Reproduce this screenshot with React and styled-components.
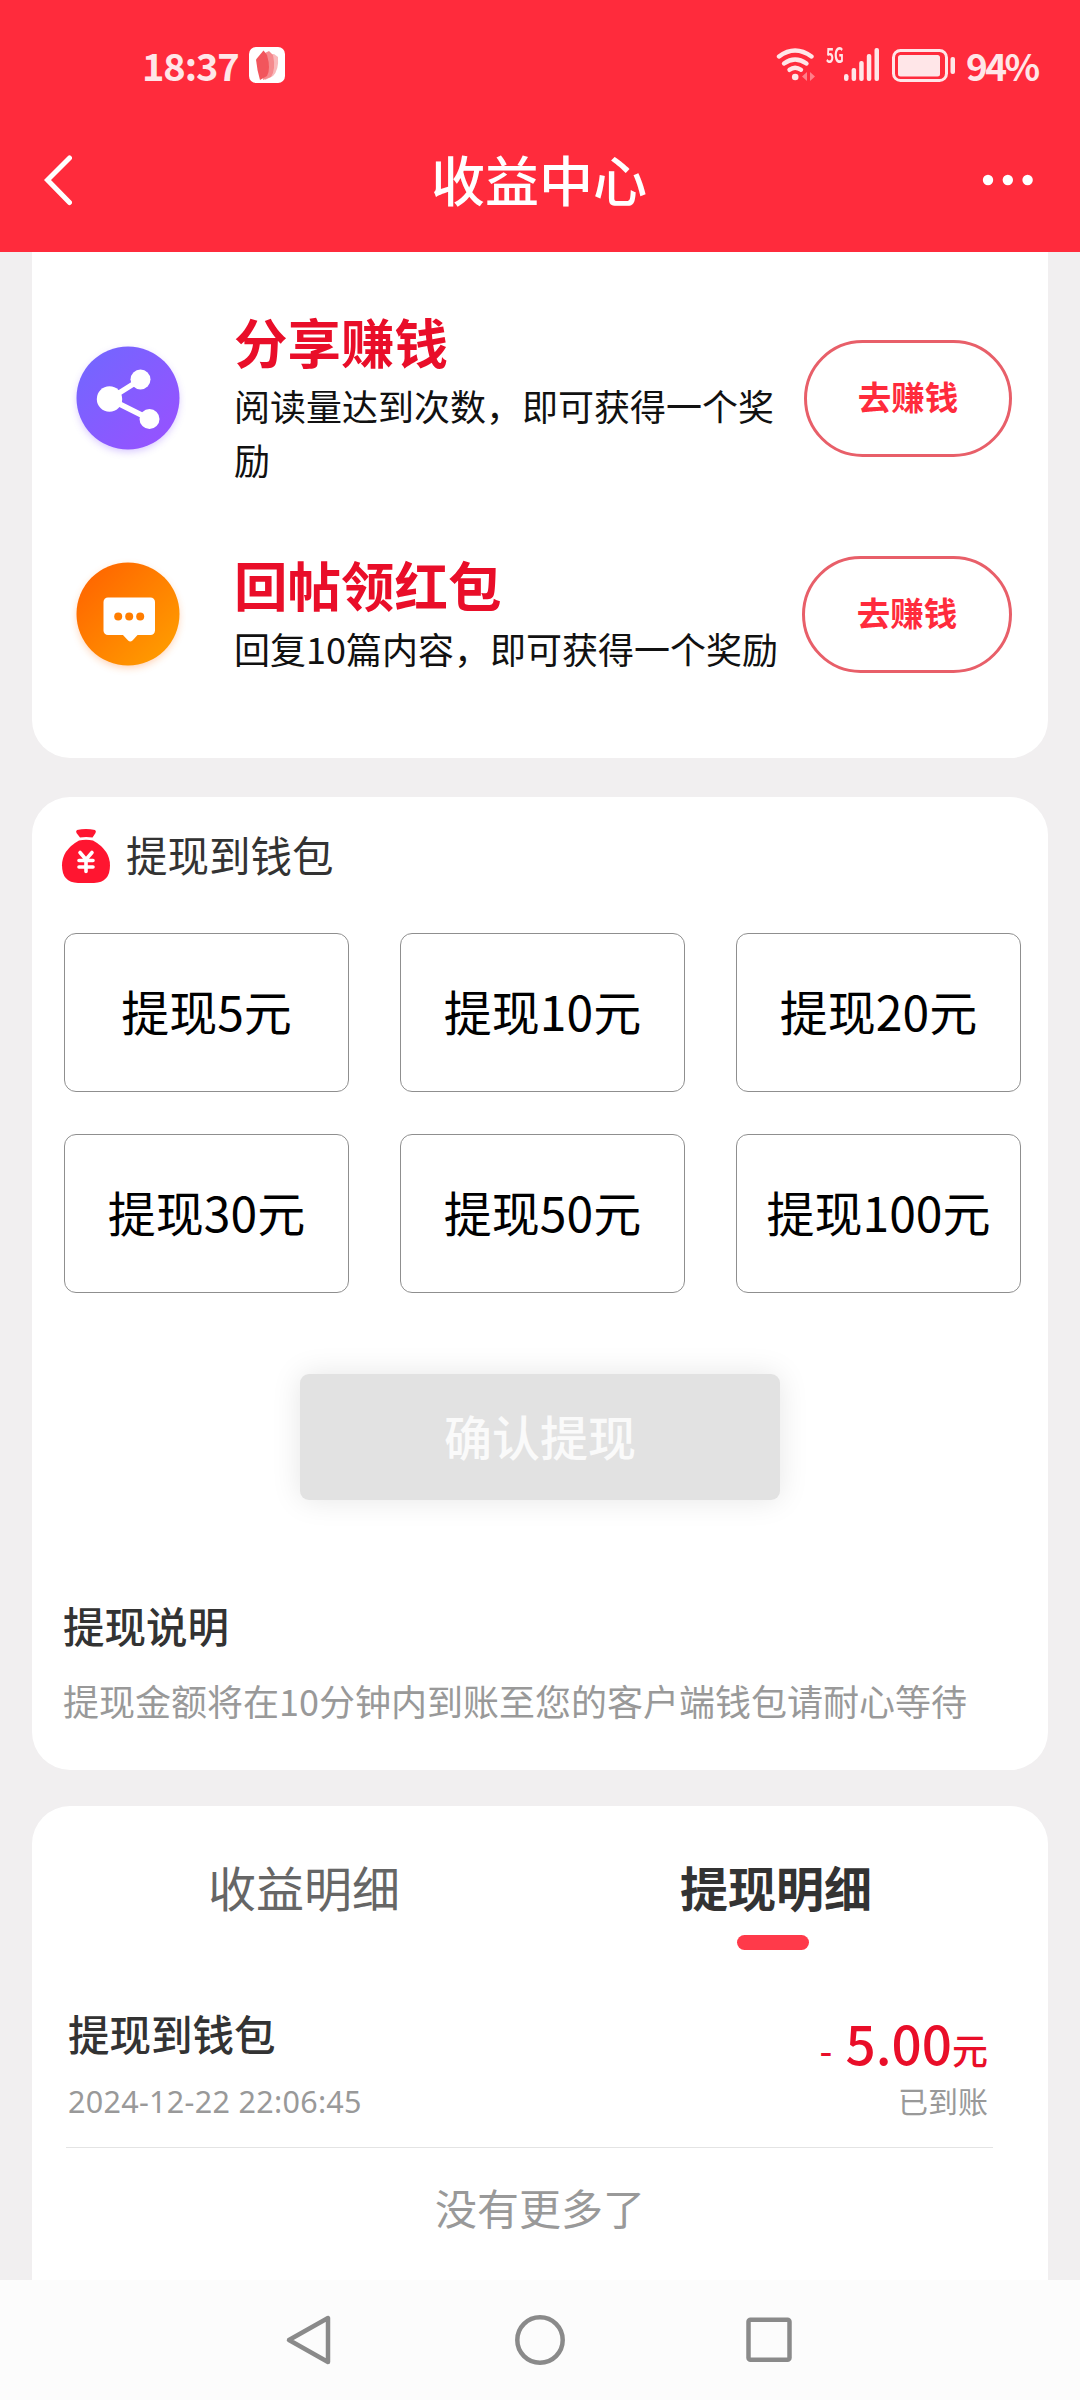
import React from 'react'
import styled, { createGlobalStyle } from 'styled-components'

const GlobalStyle = createGlobalStyle`
  * {
    box-sizing: border-box;
  }
  body {
    margin: 0;
    background: #f1eff0;
    font-family: 'Noto Sans CJK SC', 'Noto Sans', sans-serif;
  }
  button {
    font-family: inherit;
    padding: 0;
    margin: 0;
  }
`

const Screen = styled.div`
  width: 1080px;
  height: 2400px;
  display: flex;
  flex-direction: column;
  overflow: hidden;
  background: #f1eff0;
`

const Header = styled.header`
  height: 252px;
  flex: none;
  background: #ff2b3c;
  color: #fff;
`

const StatusBar = styled.div`
  height: 108px;
  padding: 22px 43px 0 142px;
  display: flex;
  align-items: center;
  justify-content: space-between;
  color: #ffe6e8;
`

const StatusGroup = styled.div`
  display: flex;
  align-items: center;
`

const Clock = styled.span`
  width: 107px;
  font-size: 38px;
  line-height: 40px;
  font-weight: 700;
  letter-spacing: -1.1px;
  white-space: nowrap;
`

const NetLabel = styled.span`
  align-self: flex-start;
  width: 18px;
  margin: 0 0 0 10px;
  font-size: 21px;
  line-height: 19px;
  font-weight: 700;
  transform: scaleX(0.65);
  transform-origin: left center;
`

const Percent = styled.span`
  margin-left: 10px;
  width: 71px;
  font-size: 37px;
  line-height: 40px;
  font-weight: 700;
  letter-spacing: -2.6px;
  white-space: nowrap;
`

const TitleBar = styled.div`
  height: 144px;
  padding: 0 46px 0 44px;
  display: grid;
  grid-template-columns: 100px 1fr 100px;
  align-items: center;

  svg:last-child {
    justify-self: end;
  }
`

const PageTitle = styled.h1`
  margin: 0;
  padding-bottom: 3px;
  text-align: center;
  font-size: 54px;
  line-height: 72px;
  font-weight: 500;
`

const Content = styled.main`
  flex: 1;
  min-height: 0;
  padding: 0 32px;
  overflow: hidden;
`

const Card = styled.section`
  background: #fff;
  border-radius: 38px;
`

const TaskCard = styled(Card)`
  height: 506px;
  padding: 60px 36px 0 38px;
  border-radius: 0 0 38px 38px;
`

const TaskRow = styled.div`
  display: flex;
  align-items: center;
  height: ${({ $height }) => $height}px;
  margin-bottom: ${({ $gap }) => $gap || 0}px;

  > svg {
    margin-bottom: 2px;
  }
`

const TaskText = styled.div`
  width: ${({ $width }) => $width}px;
  margin-left: 48px;
`

const TaskTitle = styled.h2`
  margin: -2px 0 0;
  font-size: 53.5px;
  line-height: 62px;
  font-weight: 700;
  color: #e90e29;
`

const TaskDesc = styled.p`
  margin: 6px 0 0;
  font-size: 36px;
  line-height: 54px;
  color: #111;
`

const EarnButton = styled.button`
  width: ${({ $width }) => $width}px;
  height: 117px;
  margin-left: auto;
  padding-bottom: 5px;
  border: 3px solid #e85f69;
  border-radius: 59px;
  background: #fff;
  color: #ff2b3c;
  font-size: 33.5px;
  line-height: 50px;
  font-weight: 700;
`

const WithdrawCard = styled(Card)`
  height: 973px;
  margin-top: 39px;
  padding: 28px 26px 0 32px;
`

const CardHeading = styled.div`
  display: flex;
  align-items: center;
  height: 62px;
  margin-left: -3px;
  gap: 15px;
  color: #333;

  span {
    padding-bottom: 4px;
    font-size: 41.5px;
    line-height: 62px;
  }
`

const AmountGrid = styled.div`
  margin-top: 46px;
  display: grid;
  grid-template-columns: repeat(3, 285px);
  grid-auto-rows: 159px;
  gap: 42px 51px;
`

const AmountOption = styled.button`
  padding-bottom: 5px;
  border: 1px solid #8f8f8f;
  border-radius: 12px;
  background: #fff;
  color: #000;
  font-size: 48px;
  line-height: 72px;
  white-space: nowrap;
`

const ConfirmButton = styled.button`
  display: block;
  width: 480px;
  height: 126px;
  margin: 81px 0 0 236px;
  padding-bottom: 5px;
  border: 0;
  border-radius: 9px;
  background: #e2e2e2;
  box-shadow: 0 0 30px rgba(0, 0, 0, 0.1);
  color: #fafafa;
  font-size: 48px;
  font-weight: 500;
`

const NoteTitle = styled.h3`
  margin: 94px 0 0 -1px;
  font-size: 41.5px;
  line-height: 62px;
  font-weight: 500;
  color: #333;
`

const NoteText = styled.p`
  margin: 17px 0 0 -1px;
  font-size: 36px;
  line-height: 54px;
  white-space: nowrap;
  color: #999;
`

const DetailCard = styled(Card)`
  height: 600px;
  margin-top: 36px;
  padding: 44px 32px 0;
`

const Tabs = styled.div`
  display: grid;
  grid-template-columns: 1fr 1fr;
  padding: 0 4px;
`

const Tab = styled.div`
  display: flex;
  flex-direction: column;
  align-items: center;
  height: 101px;
  font-size: 48px;
  line-height: 72px;
  font-weight: ${({ $active }) => ($active ? 700 : 400)};
  color: ${({ $active }) => ($active ? '#333' : '#666')};

  &::after {
    content: '';
    width: 72px;
    height: 15px;
    margin: 13px 6px 0 0;
    border-radius: 8px;
    background: ${({ $active }) => ($active ? '#ff3a4a' : 'transparent')};
  }
`

const Record = styled.div`
  display: flex;
  justify-content: space-between;
  width: 927px;
  height: 197px;
  margin-left: 2px;
  padding: 51px 5px 0 2px;
  border-bottom: 1px solid #e4e4e4;
`

const RecordTitle = styled.div`
  font-size: 41.5px;
  line-height: 62px;
  font-weight: 500;
  color: #333;
`

const RecordTime = styled.div`
  margin-top: 17px;
  font-family: 'Noto Sans', sans-serif;
  font-size: 30.5px;
  line-height: 40px;
  letter-spacing: 0.3px;
  color: #999;
`

const RecordSide = styled.div`
  text-align: right;
`

const RecordAmount = styled.div`
  font-size: 36px;
  line-height: 80px;
  font-weight: 500;
  color: #e90e29;

  b {
    margin-left: 5px;
    font-size: 53px;
    font-weight: 500;
  }
`

const RecordState = styled.div`
  margin-top: -9px;
  font-size: 30px;
  line-height: 40px;
  color: #999;
`

const NoMore = styled.div`
  margin-top: 28px;
  text-align: center;
  font-size: 42px;
  line-height: 62px;
  color: #999;
`

const NavBar = styled.nav`
  flex: none;
  height: 120px;
  display: flex;
  align-items: center;
  justify-content: center;
  gap: 169px;
  background: #fcfcfc;
`

const AppBadge = () => (
  <svg width="36" height="36" viewBox="0 0 36 36">
    <rect width="36" height="36" rx="7" fill="#fff" />
    <path d="M19 8l6-1 4 3q1 13-5 19l-8 4z" fill="#f9b9bb" />
    <path d="M16 6l4-2 4 4q3 14-2 22l-8 3z" fill="#f58a8e" />
    <path d="M7 12.500L14.500 3.500L18 8q4 14 0 21l-7 4q-3-10-4-20.500z" fill="#f2555c" />
  </svg>
)

const WifiIcon = () => (
  <svg width="40" height="36" viewBox="0 0 40 36" fill="none" stroke="currentColor" strokeWidth="4.4" strokeLinecap="round">
    <path d="M3 9.500Q19 -2.500 35.500 9.500" />
    <path d="M8 16.500Q19 8.500 30.500 16.500" />
    <path d="M13.500 22.800Q19 18.500 25 22.800" />
    <circle cx="19.200" cy="30" r="3.300" fill="currentColor" stroke="none" />
    <path d="M31 25v9l-5-4.500zM34 25v9l5-4.500z" fill="#ff7f89" stroke="none" />
  </svg>
)

const SignalIcon = () => (
  <svg width="36" height="36" viewBox="0 0 36 36" fill="currentColor">
    <rect x="0" y="27" width="4.500" height="7" rx="2.200" />
    <rect x="7.600" y="21" width="4.500" height="13" rx="2" />
    <rect x="15.200" y="14" width="4.500" height="20" rx="2" />
    <rect x="22.800" y="7" width="4.500" height="27" rx="2" />
    <rect x="30.500" y="1" width="4.500" height="33" rx="2" />
  </svg>
)

const BatteryIcon = styled(({ className }) => (
  <svg className={className} width="64" height="36" viewBox="0 0 64 36" fill="currentColor">
    <rect x="1.500" y="3.500" width="53" height="30" rx="7" fill="none" stroke="currentColor" strokeWidth="3" />
    <rect x="6" y="8" width="42" height="21.500" rx="2.500" />
    <rect x="58.500" y="10" width="4.500" height="17" rx="2" />
  </svg>
))`
  margin-left: 12px;
`

const ShareBadge = () => (
  <svg width="116" height="124" viewBox="0 0 116 124">
    <defs>
      <linearGradient id="share" x1="0" y1="0" x2="1" y2="1">
        <stop offset="0" stopColor="#7068ff" />
        <stop offset="1" stopColor="#9a50ff" />
      </linearGradient>
      <filter id="soft" x="-20%" y="-20%" width="140%" height="140%">
        <feGaussianBlur stdDeviation="4" />
      </filter>
    </defs>
    <circle cx="58" cy="65" r="50" fill="#8a5cff" opacity="0.4" filter="url(#soft)" />
    <circle cx="58" cy="62" r="51.500" fill="url(#share)" />
    <g fill="#fff" stroke="#fff">
      <path d="M39.500 63L70.500 43.500M39.500 63L79.500 83" strokeWidth="5.500" />
      <circle cx="39.500" cy="63" r="12.700" stroke="none" />
      <circle cx="70.500" cy="43.500" r="10" stroke="none" />
      <circle cx="79.500" cy="83" r="10" stroke="none" />
    </g>
  </svg>
)

const ReplyBadge = () => (
  <svg width="116" height="124" viewBox="0 0 116 124">
    <defs>
      <linearGradient id="reply" x1="0" y1="0" x2="1" y2="1">
        <stop offset="0.100" stopColor="#ff6600" />
        <stop offset="0.950" stopColor="#ff9f00" />
      </linearGradient>
      <filter id="glow" x="-20%" y="-20%" width="140%" height="140%">
        <feGaussianBlur stdDeviation="4" />
      </filter>
    </defs>
    <circle cx="58" cy="65" r="50" fill="#ff7a20" opacity="0.4" filter="url(#glow)" />
    <circle cx="58" cy="62" r="51.500" fill="url(#reply)" />
    <rect x="33.500" y="45.500" width="51.500" height="37.500" rx="4.500" fill="#fff" />
    <path d="M52.500 82.500h15.500l-5.500 6q-2.200 2-4.400 0z" fill="#fff" />
    <g fill="#ff7d00">
      <circle cx="48.200" cy="64.500" r="4" />
      <circle cx="59.200" cy="64.500" r="4" />
      <circle cx="70.200" cy="64.500" r="4" />
    </g>
  </svg>
)

const MoneyBag = () => (
  <svg width="50" height="56" viewBox="0 0 50 56">
    <path d="M16 2Q25 0 34 2Q35.500 3 34.500 5L31.500 9.500Q25 8.500 19 9.500L15.500 5Q14.500 3 16 2z" fill="#ff1530" />
    <path d="M18 12.500Q25 11 32 12.500Q49 22 49 37.500Q49 54.500 33 55H17Q1 54.500 1 37.500Q1 22 18 12.500z" fill="#ff1530" />
    <path d="M19 24.500l6 7 6-7M18 32.500h14M18 39h14M25 32v11.500" fill="none" stroke="#fff" strokeWidth="3.600" strokeLinecap="round" />
  </svg>
)

const amounts = [5, 10, 20, 30, 50, 100]

function App() {
  return (
    <Screen>
      <GlobalStyle />
      <Header>
        <StatusBar>
          <StatusGroup>
            <Clock>18:37</Clock>
            <AppBadge />
          </StatusGroup>
          <StatusGroup>
            <WifiIcon />
            <NetLabel>5G</NetLabel>
            <SignalIcon />
            <BatteryIcon />
            <Percent>94%</Percent>
          </StatusGroup>
        </StatusBar>
        <TitleBar>
          <svg width="28" height="52" viewBox="0 0 28 52" fill="none" stroke="#fff" strokeWidth="5" strokeLinecap="round">
            <path d="M25.500 4L3.500 26L25.500 48.500" />
          </svg>
          <PageTitle>收益中心</PageTitle>
          <svg width="54" height="14" viewBox="0 0 54 14" fill="#fff">
            <circle cx="8" cy="7" r="5.200" />
            <circle cx="27.800" cy="7" r="5.200" />
            <circle cx="47.600" cy="7" r="5.200" />
          </svg>
        </TitleBar>
      </Header>

      <Content>
        <TaskCard>
          <TaskRow $height={173} $gap={70}>
            <ShareBadge />
            <TaskText $width={544}>
              <TaskTitle>分享赚钱</TaskTitle>
              <TaskDesc>阅读量达到次数，即可获得一个奖励</TaskDesc>
            </TaskText>
            <EarnButton $width={208}>去赚钱</EarnButton>
          </TaskRow>
          <TaskRow $height={119}>
            <ReplyBadge />
            <TaskText $width={546}>
              <TaskTitle>回帖领红包</TaskTitle>
              <TaskDesc>回复10篇内容，即可获得一个奖励</TaskDesc>
            </TaskText>
            <EarnButton $width={210}>去赚钱</EarnButton>
          </TaskRow>
        </TaskCard>

        <WithdrawCard>
          <CardHeading>
            <MoneyBag />
            <span>提现到钱包</span>
          </CardHeading>
          <AmountGrid>
            {amounts.map(amount => (
              <AmountOption key={amount}>提现{amount}元</AmountOption>
            ))}
          </AmountGrid>
          <ConfirmButton>确认提现</ConfirmButton>
          <NoteTitle>提现说明</NoteTitle>
          <NoteText>提现金额将在10分钟内到账至您的客户端钱包请耐心等待</NoteText>
        </WithdrawCard>

        <DetailCard>
          <Tabs>
            <Tab>收益明细</Tab>
            <Tab $active>提现明细</Tab>
          </Tabs>
          <Record>
            <div>
              <RecordTitle>提现到钱包</RecordTitle>
              <RecordTime>2024-12-22 22:06:45</RecordTime>
            </div>
            <RecordSide>
              <RecordAmount>
                - <b>5.00</b>元
              </RecordAmount>
              <RecordState>已到账</RecordState>
            </RecordSide>
          </Record>
          <NoMore>没有更多了</NoMore>
        </DetailCard>
      </Content>

      <NavBar>
        <svg width="60" height="60" viewBox="0 0 60 60" fill="none" stroke="#8a8a8a" strokeWidth="4.500" strokeLinejoin="round">
          <path d="M47 8V52L8 30z" />
        </svg>
        <svg width="60" height="60" viewBox="0 0 60 60" fill="none" stroke="#8a8a8a" strokeWidth="4.500">
          <circle cx="30" cy="30" r="22.700" />
        </svg>
        <svg width="60" height="60" viewBox="0 0 60 60" fill="none" stroke="#8a8a8a" strokeWidth="4.500">
          <rect x="9.500" y="9.800" width="41" height="40" rx="2" />
        </svg>
      </NavBar>
    </Screen>
  )
}

export default App
